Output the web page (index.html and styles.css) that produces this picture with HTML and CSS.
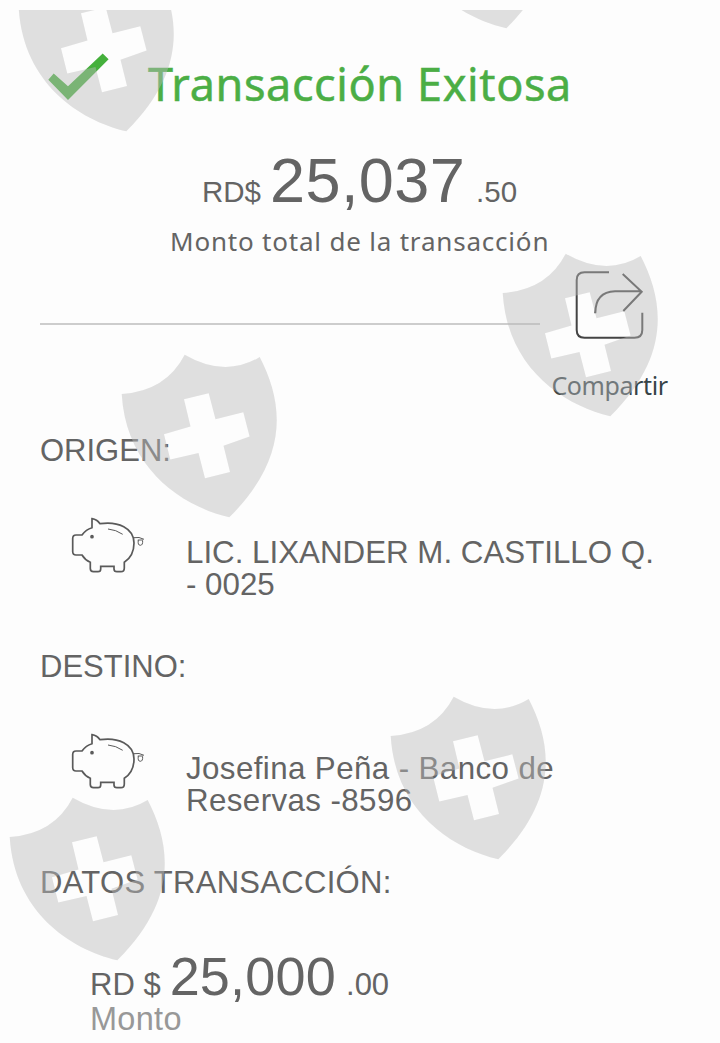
FILE: index.html
```html
<!DOCTYPE html>
<html lang="es">
<head>
    <meta charset="UTF-8">
    <title>Transacción Exitosa</title>
    <link rel="stylesheet" href="styles.css">
</head>

<body>

    <svg class="defs">
        <symbol id="shield" viewBox="0 0 160 166">
            <path fill-rule="evenodd" d="M.7 40Q45 37 63.7.7Q104 24 138.7 3C163 50 168 104 108.3 163.3C60 152 5 114 .7 40ZM63 45.3L87.7 39.3L94.5 65.3L122.3 58.3L128.6 82.5L102.5 91.8L109 118L84 124.3L77.5 99L49.3 105.5L43 80.3L69.5 72.5Z"/>
        </symbol>
        <symbol id="pig" viewBox="0 0 76 58">
            <path d="M21 10.7V1.7Q26 2.5 29 6.7C47 4 63 11 63 26Q63 39 53.3 45.3V51Q53.3 54.7 50 54.7H46Q43 54.7 43 52V49.3H29.7V52Q29.7 54.7 27 54.7H22.5Q19.3 54.7 19.3 51.5V45.3Q14 43 11 38H5Q1.7 38 1.7 34.5V21.5Q1.7 18 5 18H11Q15 12.5 21 10.7Z"/>
            <path class="thin" d="M37 12Q45 12.7 51.7 17.3M63 20.7Q68 19.5 73 22.3M66.8 23H72M67.3 23Q66.5 28.3 69.3 28.3Q72 28.3 71.6 23.5"/>
            <circle cx="21" cy="19.7" r="1"/>
        </symbol>
    </svg>

    <div class="header">
        <div class="title-row">
            <svg class="check" viewBox="0 0 62 48"><path d="M.3 26.7L5.7 20.5L20 33.3L54.7 .5L60.6 6.3L20 47Z"/></svg>
            <h1 class="title">Transacción Exitosa</h1>
        </div>
        <div class="total">
            <span class="currency">RD$</span>
            <span class="number">25,037</span>
            <span class="cents">.50</span>
        </div>
        <div class="total-text">Monto total de la transacción</div>
    </div>

    <div class="share-row">
        <div class="line"></div>
        <div class="share">
            <svg class="share-icon" viewBox="0 0 69 69"><path d="M34 1.3H9.5Q1.7 1.3 1.7 9V59Q1.7 66.7 9.5 66.7H59.5Q67.3 66.7 67.3 59V41.7M47.7 3L66.7 20.7L48.3 40M66.7 20.3H40Q20.3 21 20.3 42.3"/></svg>
            <span class="share-text">Compartir</span>
        </div>
    </div>

    <div class="section">
        <h2 class="label">ORIGEN:</h2>
        <div class="account">
            <svg class="pig"><use href="#pig"/></svg>
            <div class="name">LIC. LIXANDER M. CASTILLO Q.<br>- 0025</div>
        </div>
    </div>

    <div class="section destination">
        <h2 class="label">DESTINO:</h2>
        <div class="account">
            <svg class="pig"><use href="#pig"/></svg>
            <div class="name">Josefina Peña - Banco de<br>Reservas -8596</div>
        </div>
    </div>

    <div class="section data">
        <h2 class="label">DATOS TRANSACCIÓN:</h2>
        <div class="amount">
            <span class="currency">RD $</span>
            <span class="number">25,000</span>
            <span class="cents">.00</span>
        </div>
        <div class="amount-text">Monto</div>
    </div>

    <!-- marca de agua -->
    <div class="watermark">
        <svg class="shield s1"><use href="#shield"/></svg>
        <svg class="shield s2"><use href="#shield"/></svg>
        <svg class="shield s3"><use href="#shield"/></svg>
        <svg class="shield s4"><use href="#shield"/></svg>
        <svg class="shield s5"><use href="#shield"/></svg>
        <svg class="shield s6"><use href="#shield"/></svg>
    </div>

</body>
</html>
```
FILE: styles.css
```css
* {
    box-sizing: border-box;
}

body {
    margin: 0;
    padding: 53px 40px 0;
    height: 1043px;
    position: relative;
    overflow: hidden;
    background-color: #fdfdfd;
    color: #646464;
    font-family: "Liberation Sans", Arial, sans-serif;
}

.defs {
    display: none;
}

.title-row {
    display: flex;
    height: 60px;
}

.check {
    width: 62px;
    height: 48px;
    margin-left: 8px;
    fill: #45b03c;
}

.title {
    margin: 1px 0 0 38px;
    font-family: "Noto Sans", sans-serif;
    font-size: 45px;
    font-weight: normal;
    line-height: 60px;
    letter-spacing: 0.6px;
    white-space: nowrap;
    color: #4bae45;
    -webkit-text-stroke: 0.5px #4bae45;
}

.total {
    display: flex;
    align-items: baseline;
    margin: 36px 0 0 162px;
    height: 62px;
    line-height: 62px;
}

.total .currency,
.total .cents {
    font-size: 29.5px;
}

.total .number {
    margin: 0 11px 0 9px;
    font-size: 63px;
    letter-spacing: 0.4px;
}

.total-text {
    margin: 14px 0 0 130px;
    font-family: "Noto Sans", sans-serif;
    font-size: 26px;
    line-height: 32px;
    letter-spacing: 0.8px;
    white-space: nowrap;
}

.share-row {
    display: flex;
    height: 176px;
}

.line {
    width: 500px;
    height: 2px;
    margin-top: 66px;
    background-color: #cdcdcd;
}

.share {
    display: flex;
    flex-direction: column;
    align-items: center;
    width: 115px;
    margin-left: 12px;
    padding-top: 14px;
}

.share-icon {
    width: 69px;
    height: 69px;
    fill: none;
    stroke: #444;
    stroke-width: 2;
}

.share-text {
    margin-top: 30px;
    font-family: "Noto Sans", sans-serif;
    font-size: 25px;
    line-height: 30px;
    letter-spacing: -0.4px;
    color: #364347;
}

.destination,
.data {
    margin-top: 47px;
}

.label {
    margin: 0;
    font-size: 31px;
    font-weight: normal;
    line-height: 36px;
}

.data .label {
    letter-spacing: 0.3px;
}

.account {
    display: flex;
    height: 84px;
    margin-top: 49px;
    padding-left: 31px;
}

.pig {
    width: 76px;
    height: 58px;
    margin-top: -1px;
    fill: none;
    stroke: #5a5a5a;
    stroke-width: 1.7;
}

.thin {
    stroke-width: 1;
}

.name {
    margin: 19px 0 0 39px;
    font-size: 31.3px;
    line-height: 32px;
    white-space: nowrap;
}

.destination .name {
    letter-spacing: 0.4px;
}

.amount {
    display: flex;
    align-items: baseline;
    height: 50px;
    margin: 50px 0 0 50px;
    line-height: 50px;
}

.amount .currency,
.amount .cents {
    font-size: 31px;
}

.amount .number {
    margin: 0 10px 0 9px;
    font-size: 54px;
    letter-spacing: 0.2px;
}

.amount-text {
    margin: 1px 0 0 50px;
    font-size: 32.5px;
    line-height: 34px;
    letter-spacing: 0.3px;
    color: #989898;
}

.watermark {
    position: absolute;
    top: 10px;
    left: 0;
    width: 720px;
    height: 1033px;
    overflow: hidden;
    pointer-events: none;
}

.shield {
    position: absolute;
    width: 160px;
    height: 166px;
    fill: rgba(187, 187, 187, 0.45);
}

.s1 { left: 18px; top: -42px; }
.s2 { left: 398px; top: -145px; }
.s3 { left: 502px; top: 243px; }
.s4 { left: 121px; top: 344px; }
.s5 { left: 390px; top: 686px; }
.s6 { left: 9px; top: 787px; }
```
